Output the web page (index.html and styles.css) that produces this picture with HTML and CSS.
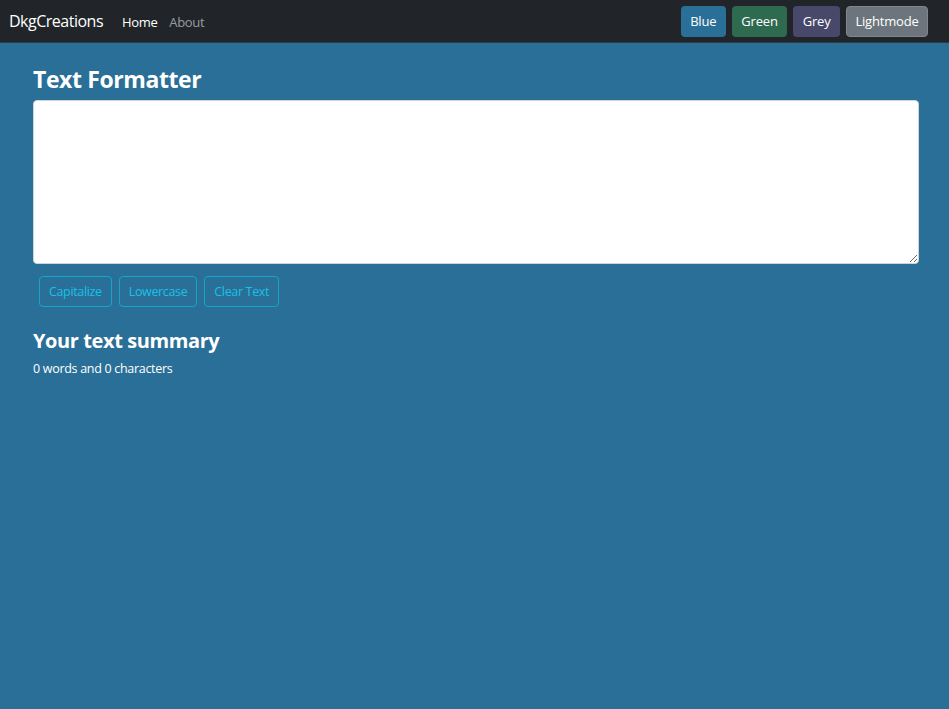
FILE: index.html
```html
<!DOCTYPE html>
<html lang="en">
<head>
  <meta charset="utf-8">
  <meta name="viewport" content="width=device-width, initial-scale=1.0">
  <title>Text Formatter</title>
  <link rel="stylesheet" href="styles.css">
</head>
<body>
  <nav class="navbar">
    <a class="brand" href="#">DkgCreations</a>
    <ul class="nav-links">
      <li><a class="active" href="#">Home</a></li>
      <li><a href="#">About</a></li>
    </ul>
    <div class="themes">
      <button class="theme theme-blue">Blue</button>
      <button class="theme theme-green">Green</button>
      <button class="theme theme-grey">Grey</button>
      <button class="theme theme-light">Lightmode</button>
    </div>
  </nav>

  <main class="content">
    <h2>Text Formatter</h2>
    <textarea id="text" rows="8"></textarea>
    <div class="actions">
      <button class="btn-outline">Capitalize</button>
      <button class="btn-outline">Lowercase</button>
      <button class="btn-outline">Clear Text</button>
    </div>

    <h3>Your text summary</h3>
    <p class="summary">0 words and 0 characters</p>
  </main>
</body>
</html>
```

FILE: styles.css
```css
* {
  box-sizing: border-box;
}

body {
  margin: 0;
  background-color: #2a6f97;
  color: #fff;
  font-family: "Open Sans", "Noto Sans", sans-serif;
  min-height: 100vh;
}

.navbar {
  display: flex;
  align-items: center;
  height: 43px;
  padding: 0 21px 0 9px;
  background-color: #212529;
  border-bottom: 1px solid #2e3a44;
}

.brand {
  color: #fff;
  text-decoration: none;
  font-size: 16px;
  letter-spacing: -0.5px;
  margin-right: 19px;
}

.nav-links {
  display: flex;
  gap: 12px;
  list-style: none;
  margin: 0;
  padding: 0;
}

.nav-links a {
  color: rgba(255, 255, 255, 0.55);
  text-decoration: none;
  font-size: 13px;
  letter-spacing: -0.35px;
}

.nav-links a.active {
  color: #fff;
}

.themes {
  margin-left: auto;
  display: flex;
  gap: 6px;
}

.theme {
  height: 31px;
  padding: 0 8.5px;
  border: 1px solid transparent;
  border-radius: 4px;
  color: #fff;
  font-family: inherit;
  font-size: 13px;
  letter-spacing: -0.2px;
  cursor: pointer;
}

.theme-blue {
  background-color: #2a6f97;
}

.theme-green {
  background-color: #2d6a4f;
}

.theme-grey {
  background-color: #48486a;
}

.theme-light {
  background-color: #6c757d;
  border-color: #80878d;
}

.content {
  padding: 23px 30px 0 33px;
}

h2 {
  margin: 0 0 6px;
  font-size: 23px;
  font-weight: 700;
  letter-spacing: -0.4px;
  line-height: 1.2;
}

textarea {
  display: block;
  width: 100%;
  height: 164px;
  border: 1px solid #ced4da;
  border-radius: 4px;
  background: #fff;
  resize: vertical;
}

.actions {
  display: flex;
  gap: 7px;
  margin: 12px 0 0 6px;
}

.btn-outline {
  height: 31px;
  padding: 0 9px;
  background: transparent;
  border: 1px solid #13a6cc;
  border-radius: 4px;
  color: #1bc0e6;
  font-family: inherit;
  font-size: 12.5px;
  letter-spacing: -0.35px;
  cursor: pointer;
}

h3 {
  margin: 22px 0 7px;
  font-size: 20px;
  font-weight: 700;
  letter-spacing: -0.4px;
  line-height: 1.2;
}

.summary {
  margin: 0;
  font-size: 12.5px;
  letter-spacing: -0.3px;
}
```
